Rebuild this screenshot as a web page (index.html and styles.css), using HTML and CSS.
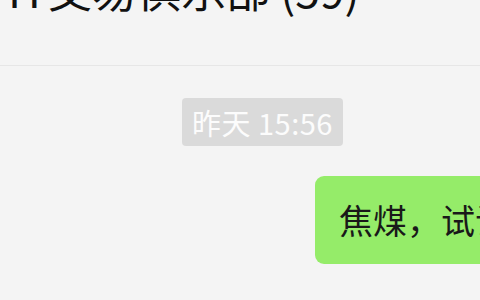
FILE: index.html
```html
<!DOCTYPE html>
<html lang="zh-CN">
<head>
<meta charset="utf-8">
<title>IT交易俱乐部</title>
<link rel="stylesheet" href="styles.css">
</head>
<body>
<div class="chat">
  <header class="chat-header">
    <h1 class="chat-title">IT交易俱乐部 (59)</h1>
  </header>
  <main class="messages">
    <div class="time-row">
      <span class="timestamp">昨天 15:56</span>
    </div>
    <div class="msg-row">
      <div class="bubble">焦煤，试试看能不能到位</div>
    </div>
  </main>
</div>
</body>
</html>
```
FILE: styles.css
```css
html, body {
  margin: 0;
  padding: 0;
  width: 480px;
  height: 300px;
  overflow: hidden;
  background: #f4f4f4;
  font-family: "Noto Sans CJK SC", "Noto Sans", sans-serif;
}

.chat {
  display: flex;
  flex-direction: column;
  width: 480px;
  height: 300px;
}

.chat-header {
  height: 66px;
  border-bottom: 1px solid #e6e6e6;
  box-sizing: border-box;
  overflow: hidden;
  flex-shrink: 0;
}

.chat-title {
  margin: -33px 0 0 8px;
  font-size: 44.5px;
  line-height: 44px;
  font-weight: 400;
  color: #111;
  white-space: nowrap;
}

.messages {
  display: flex;
  flex-direction: column;
}

.time-row {
  display: flex;
  padding: 32px 0 0 182px;
}

.timestamp {
  display: inline-block;
  height: 48px;
  line-height: 48px;
  padding: 0 10px;
  background: #dadada;
  border-radius: 4px;
  color: #fcfcfc;
  font-size: 29px;
  letter-spacing: 0.5px;
  white-space: nowrap;
}

.msg-row {
  display: flex;
  padding: 30px 0 0 315px;
}

.bubble {
  flex-shrink: 0;
  height: 88px;
  line-height: 88px;
  padding: 0 24px;
  background: #95ec69;
  border-radius: 9px;
  color: #191919;
  font-size: 34px;
  white-space: nowrap;
}
```
